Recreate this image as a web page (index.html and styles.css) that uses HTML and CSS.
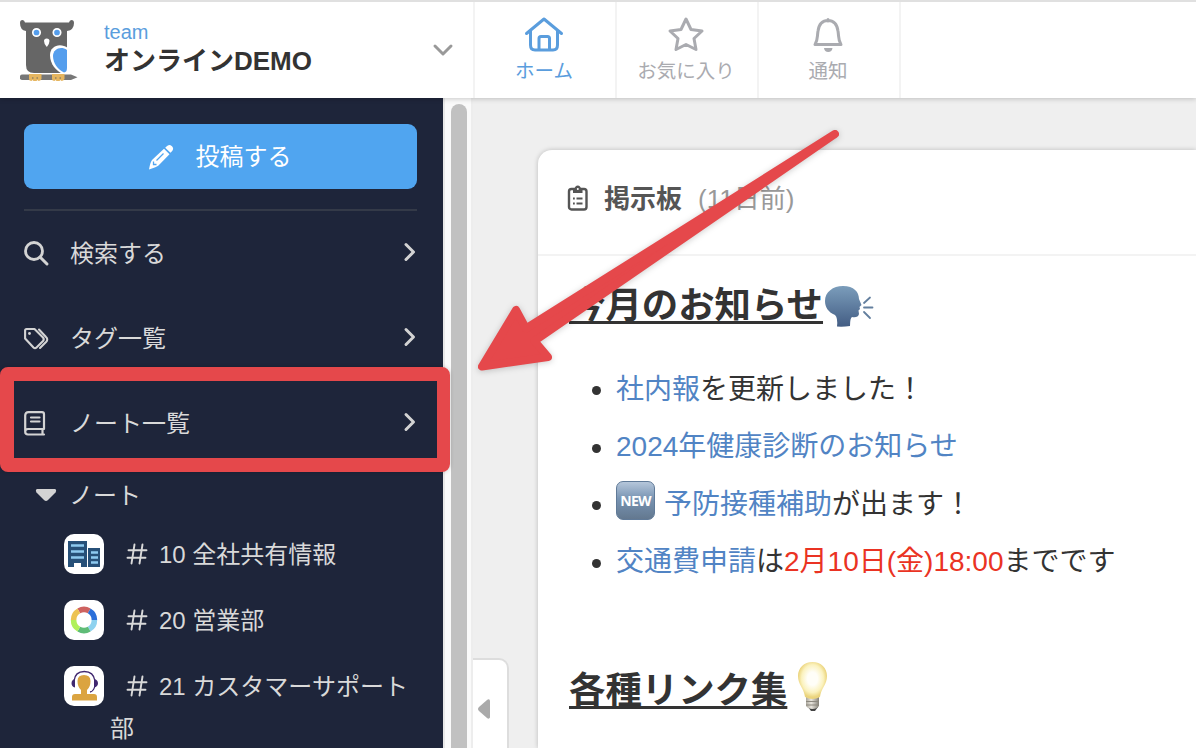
FILE: index.html
```html
<!DOCTYPE html>
<html lang="ja">
<head>
  <meta charset="UTF-8" />
  <meta name="viewport" content="width=device-width, initial-scale=1.0"/>
  <title>オンラインDEMO</title>
  <link rel="stylesheet" href="styles.css">
</head>
<body>
  <header class="header">
    <div class="team">
      <svg class="logo" width="60" height="64" viewBox="0 0 60 64">
        <path fill="#666" d="M0 3Q0 0 2.500 0Q4.500 0 5 2.500H49Q49.500 0 51.500 0Q54 0 54 3Q54 10 47 11V53H14Q6 53 6 45V11Q0 10 0 3Z"/>
        <circle cx="16.500" cy="12.500" r="3.700" fill="#559eed" stroke="#fff" stroke-width="1.700"/>
        <circle cx="37" cy="12.500" r="3.700" fill="#559eed" stroke="#fff" stroke-width="1.700"/>
        <path fill="#fff" d="M24 21Q24 18.500 26.700 18.500Q29.500 18.500 29.500 21Q29.500 24 26.800 27Q24 24 24 21Z"/>
        <path fill="#fff" d="M48 28C40 22 30 26 30 35C30 44 36 51 43 54L48 53Z"/>
        <path fill="#559eed" d="M47 30C41 25.500 33 29 33 36C33 43 38 50 44 52.500Q47 52 47 48Z"/>
        <path fill="#777" d="M2.500 54.500H51L57.500 57.300L51 60H2.500A2.700 2.700 0 0 1 2.500 54.500Z"/>
        <path fill="#e5b55f" d="M9 54h12.500v5q-1 2-3 2l-1-1-1 1h-3l-1-1-1 1q-2.500 0-2.500-2zM32 54h12.500v5q-1 2-3 2l-1-1-1 1h-3l-1-1-1 1q-2.500 0-2.500-2z"/>
        <path stroke="#666" d="M12 58h1.500M16.500 58h1.500M35 58h1.500M39.500 58h1.500"/>
      </svg>
      <div class="team-text">
        <div class="team-label">team</div>
        <div class="team-name">オンラインDEMO</div>
      </div>
      <svg class="chevron-down" width="22" height="14" viewBox="0 0 22 14"><path d="M3 3l8 8 8-8"/></svg>
    </div>
    <nav class="tabs">
      <a class="tab active">
        <svg width="40" height="38" viewBox="0 0 40 38"><path d="M2.500 17.500L20 3L37.500 17.500M6.500 15V29Q6.500 34 11 34H29Q33.500 34 33.500 29V15M15 33V22.500Q15 20.500 17 20.500H23.500Q25.500 20.500 25.500 22.500V33"/></svg>
        <span>ホーム</span>
      </a>
      <a class="tab">
        <svg width="40" height="38" viewBox="0 0 40 38"><path d="M20 3L25 13.500L36 15L28 22.500L30 33.500L20 28.500L10 33.500L12 22.500L4 15L15 13.500Z"/></svg>
        <span>お気に入り</span>
      </a>
      <a class="tab">
        <svg width="40" height="38" viewBox="0 0 40 38"><path d="M7 28.500H33C30 24 31 21 30 15C29 8 25 4.500 20 4.500S11 8 10 15C9 21 10 24 7 28.500ZM20 3.500V5"/><path class="solid" d="M16 32H24.500Q24 36 20.200 36Q16.500 36 16 32Z"/></svg>
        <span>通知</span>
      </a>
    </nav>
  </header>

  <div class="page">
    <aside class="sidebar">
      <button class="post">
        <svg width="26" height="26" viewBox="0 0 26 26"><path fill="#fff" d="M18.500 2.500Q21-.5 24 2.200Q26.500 5 23.500 7.800L22.500 8.800L17.200 3.700Z M16 4.700L21.500 10.200L10.500 21.500Q9 23 1 25.500Q2.500 17 4.500 15.500Z"/><path fill="none" stroke="#50a5f0" stroke-width="1.300" d="M15.500 9.500L8.500 16.500M5.500 17.500V20.500H8.500"/></svg>
        <span>投稿する</span>
      </button>
      <ul class="menu">
        <li>
          <svg class="menu-icon" width="26" height="26" viewBox="0 0 26 26"><circle cx="10" cy="10" r="8.500" stroke-width="2.800"/><path stroke-width="3" d="M16 16l7 7"/></svg>
          <span>検索する</span>
          <svg class="chevron" width="14" height="20" viewBox="0 0 14 20"><path d="M3 2.500l7.500 7.500L3 17.500"/></svg>
        </li>
        <li>
          <svg class="menu-icon" width="26" height="26" viewBox="0 0 26 26"><path stroke-width="2.100" d="M1.100 4.500Q1.100 3 2.600 3H10.500L19 11.500Q20.500 13.200 19 15L12.500 21.500Q11 23 9.500 21.500L1.100 12.500ZM15 3.500L22 11Q24.500 13.300 22 16L16 22"/><circle cx="5.500" cy="7.500" r="1.400" fill="#d3d3d3" stroke="none"/></svg>
          <span>タグ一覧</span>
          <svg class="chevron" width="14" height="20" viewBox="0 0 14 20"><path d="M3 2.500l7.500 7.500L3 17.500"/></svg>
        </li>
        <li>
          <svg class="menu-icon" width="26" height="26" viewBox="0 0 26 26"><path stroke-width="2.200" d="M20 18H4Q1.200 18 1.200 20.700T4 23.500H20M18.500 18V23.500M1.200 20.500V4.500Q1.200 1.200 4.500 1.200H18Q20 1.200 20 3.200V18M7 6.500H15.500M7 10.500H15.500"/></svg>
          <span>ノート一覧</span>
          <svg class="chevron" width="14" height="20" viewBox="0 0 14 20"><path d="M3 2.500l7.500 7.500L3 17.500"/></svg>
        </li>
      </ul>
      <div class="group">
        <svg width="22" height="14" viewBox="0 0 22 14"><path fill="#d3d3d3" d="M2 1H20Q22 2 20.500 4.500L13 12Q11 14 9 12L1.500 4.500Q0 2 2 1Z"/></svg>
        <span>ノート</span>
      </div>
      <ul class="notes">
        <li>
          <svg class="note-icon" viewBox="0 0 40 40"><path fill="#275078" d="M4 7H23V33H17V29H10V33H4ZM24 14H36V33H24Z"/><path stroke="#8ecaf0" stroke-width="2.300" d="M7 11.500H20M7 17.500H20M7 23.500H20M27 18.500H34M27 23.500H34M27 28.500H34"/></svg>
          <div class="note-name"><svg class="hash" width="22" height="22" viewBox="0 0 22 22"><path d="M8.500 1.500L5.500 20.500M16.500 1.500L13.500 20.500M2.500 7.300H20.500M1.500 14.700H19.500"/></svg>10 全社共有情報</div>
        </li>
        <li>
          <svg class="note-icon" viewBox="0 0 40 40"><g fill="none" stroke-width="5.600"><path stroke="#ce6260" d="M14.800 10.900A10.400 10.400 0 0 1 25.200 10.900"/><path stroke="#2b6fd9" d="M25.200 10.900A10.400 10.400 0 0 1 30.400 20"/><path stroke="#8ed2ef" d="M30.400 20A10.400 10.400 0 0 1 25.200 29.100"/><path stroke="#5fbc77" d="M25.200 29.100A10.400 10.400 0 0 1 14.800 29.100"/><path stroke="#b0f05b" d="M14.800 29.100A10.400 10.400 0 0 1 9.600 20"/><path stroke="#edc353" d="M9.600 20A10.400 10.400 0 0 1 14.800 10.900"/></g></svg>
          <div class="note-name"><svg class="hash" width="22" height="22" viewBox="0 0 22 22"><path d="M8.500 1.500L5.500 20.500M16.500 1.500L13.500 20.500M2.500 7.300H20.500M1.500 14.700H19.500"/></svg>20 営業部</div>
        </li>
        <li>
          <svg class="note-icon" viewBox="0 0 40 40"><path fill="#dba440" d="M13.500 15Q13.500 9 20 9T26.500 15Q26.500 21 23 24V28H30Q33 28 33 31V34.500H8V31Q8 28 11 28H17V24Q13.500 21 13.500 15Z"/><path fill="none" stroke="#41286f" stroke-width="1.300" d="M10 15Q11 5.500 20.300 5.500T31 15M31 19Q30 25.500 26 26"/><path fill="#41286f" d="M11 13V21.500Q7.500 20.500 7.500 17.200T11 13ZM30 13V21.500Q34 20.500 34 17.200T30 13Z"/></svg>
          <div class="note-name"><svg class="hash" width="22" height="22" viewBox="0 0 22 22"><path d="M8.500 1.500L5.500 20.500M16.500 1.500L13.500 20.500M2.500 7.300H20.500M1.500 14.700H19.500"/></svg>21 カスタマーサポート部</div>
        </li>
      </ul>
    </aside>
    <div class="scrollbar"><div class="thumb"></div></div>

    <main class="main">
      <div class="toggle">
        <svg width="12" height="20" viewBox="0 0 12 20"><path fill="#aaa" d="M12 1.500V18.500Q11 20.500 9 19L1 12Q-1 10 1 8L9 1Q11-.5 12 1.500Z"/></svg>
      </div>
      <section class="card">
        <div class="card-head">
          <svg width="22" height="28" viewBox="0 0 22 28"><rect x="2" y="5" width="17.500" height="20.500" rx="2.500" fill="none" stroke="#555" stroke-width="2.400"/><path fill="#555" d="M6 9V5H7.500Q8 1.500 10.800 1.500T14 5H15.500V9Z"/><circle cx="10.800" cy="5" r="1" fill="#fff"/><path stroke="#555" stroke-width="1.900" d="M6 14.500H7.800M9.500 14.500H15.500M6 19.500H7.800M9.500 19.500H15.500"/></svg>
          <span class="card-title">掲示板</span>
          <span class="card-date">(11日前)</span>
        </div>
        <div class="card-body">
          <h2><u>今月のお知らせ</u><svg class="emoji" width="52" height="46" viewBox="0 0 52 46">
            <defs><linearGradient id="head" x2="0" y2="1"><stop stop-color="#7b9dbb"/><stop offset="1" stop-color="#435d84"/></linearGradient></defs>
            <path fill="url(#head)" d="M20 2C31 2 36 8 36 15L38.500 21L36.500 23L37 25L35.500 26.500L36 30Q35 34 29 33Q27 34 27 42Q20 43 14 42.500Q15 34 12 31C5 28 2 23 2 17C2 8 10 2 20 2Z"/>
            <path fill="none" stroke="#637f9e" stroke-width="1.800" stroke-linecap="round" d="M41 19L47 13.500M41 23.500H49.500M41 28L47 34"/>
          </svg></h2>
          <ul class="news">
            <li><a>社内報</a>を更新しました！</li>
            <li><a>2024年健康診断のお知らせ</a></li>
            <li><span class="new">NEW</span><a>予防接種補助</a>が出ます！</li>
            <li><a>交通費申請</a>は<span class="red">2月10日(金)18:00</span>までです</li>
          </ul>
          <h2 class="links"><u>各種リンク集</u><svg class="bulb" width="34" height="52" viewBox="0 0 34 52">
            <defs><radialGradient id="glow" cy=".45"><stop offset=".35" stop-color="#fffef8"/><stop offset=".75" stop-color="#fbf2be"/><stop offset="1" stop-color="#ebd47d"/></radialGradient>
            <linearGradient id="screw"><stop stop-color="#aaa69b"/><stop offset=".4" stop-color="#e8e5de"/><stop offset="1" stop-color="#858178"/></linearGradient></defs>
            <path fill="#444" d="M12 46H22L19 50H15Z"/>
            <path fill="url(#screw)" d="M10 36H23V45Q21 48 16.500 48T10 45Z"/>
            <path stroke="#8c887f" d="M10 40.500H23M10 44H23"/>
            <path fill="url(#glow)" d="M16.500 1C25 1 31 7 31 15C31 24 25 27 24 36Q16.500 40 9 36C8 27 2 24 2 15C2 7 8 1 16.500 1Z"/>
          </svg></h2>
        </div>
      </section>
    </main>
  </div>

  <div class="highlight"></div>
  <svg class="arrow" width="380" height="260" viewBox="470 120 380 260">
    <path d="M835 134L526 328.500L516 310L482 366.500L548 357L534.500 341Z"/>
  </svg>
</body>
</html>
```
FILE: styles.css
```css
* {
  box-sizing: border-box;
}
body {
  margin: 0;
  height: 748px;
  overflow: hidden;
  position: relative;
  font-family: "Liberation Sans", "Noto Sans CJK JP", sans-serif;
  background: #efefef;
  color: #333;
}
ul {
  list-style: none;
  margin: 0;
  padding: 0;
}
svg {
  flex-shrink: 0;
}
.header {
  display: flex;
  height: 98px;
  border-top: 2px solid #e0e0e0;
  background: #fff;
  position: relative;
  z-index: 1;
  box-shadow: 0 1px 5px rgba(0,0,0,0.2);
}
.team {
  display: flex;
  width: 473px;
  padding: 18px 19px 0 20px;
}
.team-text {
  margin-left: 24px;
  flex: 1;
}
.team-label {
  color: #5a9ddd;
  font-size: 20px;
  line-height: 24px;
}
.team-name {
  font-size: 26px;
  line-height: 34px;
  font-weight: bold;
}
.chevron-down {
  margin-top: 23px;
}
.chevron-down path {
  fill: none;
  stroke: #999;
  stroke-width: 3;
  stroke-linecap: round;
  stroke-linejoin: round;
}
.tabs {
  display: flex;
  border-left: 2px solid #f3f3f3;
}
.tab {
  display: flex;
  flex-direction: column;
  align-items: center;
  width: 142px;
  padding: 14px 2px 0 0;
  border-right: 2px solid #f3f3f3;
  color: #aaabb0;
  font-size: 19.500px;
  line-height: 34px;
}
.tab.active {
  color: #5a9ddd;
}
.tab path {
  fill: none;
  stroke: currentColor;
  stroke-width: 3;
  stroke-linecap: round;
  stroke-linejoin: round;
}
.tab .solid {
  fill: currentColor;
  stroke: none;
}
.page {
  display: flex;
  height: 650px;
  overflow: hidden;
}
.sidebar {
  width: 443px;
  padding: 26px 26px 0 24px;
  background: #1e253a;
  color: #d9d9d9;
  font-size: 24px;
  overflow: hidden;
}
.post {
  display: flex;
  align-items: center;
  justify-content: center;
  gap: 22px;
  width: 100%;
  height: 65px;
  padding: 0 8px 0 6px;
  border: none;
  border-radius: 9px;
  background: #50a5f0;
  color: #fff;
  font: inherit;
}
.post span {
  padding-bottom: 4px;
}
.menu {
  margin-top: 20px;
  border-top: 2px solid #343a48;
}
.menu li {
  display: flex;
  align-items: center;
  height: 85px;
}
.menu span {
  margin-left: 20px;
  padding-bottom: 4px;
  flex: 1;
}
.menu-icon {
  fill: none;
  stroke: #d3d3d3;
  stroke-linecap: round;
  stroke-linejoin: round;
}
.chevron {
  margin-bottom: 3px;
}
.chevron path {
  fill: none;
  stroke: #d3d3d3;
  stroke-width: 3;
  stroke-linecap: round;
  stroke-linejoin: round;
}
.group {
  display: flex;
  align-items: center;
  gap: 12px;
  height: 36px;
  margin-top: 11px;
  padding-left: 11px;
}
.group span {
  padding-bottom: 4px;
}
.notes {
  margin: 20px -6px 0 40px;
}
.notes li {
  display: flex;
  height: 66px;
}
.note-icon {
  width: 40px;
  height: 40px;
  margin-top: 1px;
  background: #fff;
  border-radius: 10px;
}
.note-name {
  margin: 1px 0 0 6px;
  text-indent: 16px;
  line-height: 42px;
}
.hash {
  margin-right: 11px;
  vertical-align: -2px;
}
.hash path {
  fill: none;
  stroke: #d9d9d9;
  stroke-width: 1.900;
  stroke-linecap: round;
}
.scrollbar {
  width: 30px;
  padding: 6px 6px 0;
  background: #fafafa;
  border-left: 2px solid #e8e8e8;
  border-right: 2px solid #ededed;
}
.thumb {
  width: 16px;
  height: 644px;
  border-radius: 8px 8px 0 0;
  background: #c1c1c1;
}
.main {
  flex: 1;
  position: relative;
  padding: 52px 0 0 65px;
}
.toggle {
  position: absolute;
  left: 0;
  top: 560px;
  width: 36px;
  height: 90px;
  padding: 39px 0 0 5px;
  background: #fff;
  border: 2px solid #ddd;
  border-left: none;
  border-bottom: none;
  border-radius: 0 10px 0 0;
}
.card {
  height: 598px;
  background: #fff;
  border-radius: 14px 0 0 0;
  box-shadow: 0 0 5px rgba(0,0,0,0.22);
}
.card-head {
  display: flex;
  align-items: center;
  height: 106px;
  padding: 0 0 8px 29px;
  border-bottom: 2px solid #f3f3f3;
  font-size: 26px;
}
.card-title {
  margin-left: 15px;
  padding-bottom: 4px;
  font-weight: bold;
  color: #555;
}
.card-date {
  margin-left: 16px;
  padding-bottom: 4px;
  color: #999;
}
.card-body {
  padding: 18px 0 0 31px;
}
h2 {
  display: flex;
  align-items: center;
  height: 64px;
  margin: 0;
  font-size: 36.400px;
  line-height: 64px;
}
u {
  text-decoration-thickness: 3px;
  text-underline-offset: 3px;
  text-decoration-skip-ink: none;
}
.emoji {
  margin-top: 2px;
}
.bulb {
  margin: 0 0 9px 9px;
}
.news {
  margin: 20px 0 0 47px;
  font-size: 28px;
}
.news li {
  display: flex;
  align-items: center;
  position: relative;
  height: 57.500px;
  white-space: nowrap;
}
.news li::before {
  content: "";
  position: absolute;
  left: -24px;
  top: 28px;
  width: 9px;
  height: 9px;
  border-radius: 50%;
  background: #333;
}
.news a {
  color: #5184c4;
}
.red {
  color: #ea3323;
}
.new {
  width: 39px;
  height: 39px;
  margin: 0 9px 2px 0;
  border: 1px solid #607a98;
  border-radius: 7px;
  background: linear-gradient(#b5c6da, #7894b3 45%, #63788f);
  color: #fff;
  font: bold 14px/37px "Open Sans", sans-serif;
  letter-spacing: -0.800px;
  text-align: center;
}
.links {
  margin-top: 71px;
}
.highlight {
  position: absolute;
  left: 0;
  top: 367px;
  width: 450px;
  height: 105px;
  border: 14px solid #e5484b;
  border-right-width: 13px;
  border-radius: 8px;
  box-shadow: 0 0 4px rgba(0,0,0,0.2);
}
.arrow {
  position: absolute;
  left: 470px;
  top: 120px;
  filter: drop-shadow(0 1px 3px rgba(0,0,0,0.2));
}
.arrow path {
  fill: #e5484b;
  stroke: #e5484b;
  stroke-width: 8;
  stroke-linejoin: round;
}
```
